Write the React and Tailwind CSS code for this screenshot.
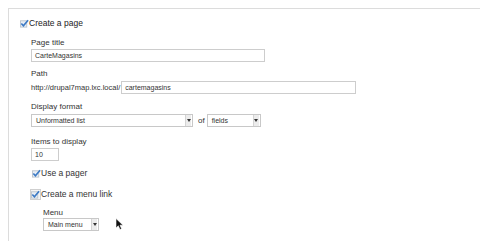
import React from "react";

const Check = ({ boxed }) => (
  <span className={`inline-flex items-center justify-center ${boxed ? "w-[11px] h-[11px] border border-[#cfcfcf] bg-[#f4f4f4]" : "w-[9px] h-[9px]"}`}>
    <svg width="10" height="9" viewBox="0 0 10 9">
      <rect x="0.5" y="1.5" width="7" height="7" fill="#e8eef5" stroke="#b9c3cc" strokeWidth="1" />
      <path d="M1.5 4.5 L3.8 7 L9 0.8" fill="none" stroke="#3b79c4" strokeWidth="1.8" />
    </svg>
  </span>
);

const Select = ({ value, width }) => (
  <div className={`flex items-center h-[13px] border border-[#c8c8c8] bg-white ${width}`}>
    <span className="flex-1 pl-[4px] text-[7px] text-[#333] leading-none">{value}</span>
    <span className="flex items-center justify-center w-[6px] h-[11px] mr-[1px] border-l border-[#d4d4d4] bg-[#ececec]">
      <svg width="4" height="3" viewBox="0 0 4 3">
        <path d="M0 0 H4 L2 3 Z" fill="#333" />
      </svg>
    </span>
  </div>
);

const Label = ({ children, className = "" }) => (
  <div className={`text-[8px] leading-none text-[#333] ${className}`}>{children}</div>
);

const Input = ({ value, width }) => (
  <div className={`flex items-center h-[13px] border border-[#cdcdcd] bg-white pl-[3px] text-[7px] text-[#333] leading-none ${width}`}>
    {value}
  </div>
);

export default function App() {
  return (
    <div className="w-[480px] h-[241px] bg-white pt-[8px] pl-[8px] overflow-hidden" style={{ fontFamily: '"Liberation Sans", Arial, sans-serif' }}>
      <div className="h-full border-t border-l border-[#dcdcdc] relative">
        <div className="flex items-center pl-[11px] pt-[10px]">
          <Check />
          <span className="text-[8.5px] text-[#222] leading-none">Create a page</span>
        </div>

        <div className="pl-[22px]">
          <Label className="mt-[11px]">Page title</Label>
          <Input value="CarteMagasins" width="w-[234px] mt-[2px]" />

          <Label className="mt-[8px]">Path</Label>
          <div className="flex items-center mt-[3px]">
            <span className="text-[7.5px] text-[#333] leading-none">http://drupal7map.lxc.local/</span>
            <Input value="cartemagasins" width="w-[235px] ml-[1px] h-[12px]" />
          </div>

          <Label className="mt-[9px]">Display format</Label>
          <div className="flex items-center mt-[3px]">
            <Select value="Unformatted list" width="w-[162px]" />
            <span className="text-[8px] text-[#333] ml-[5px] mr-[2px] leading-none">of</span>
            <Select value="fields" width="w-[54px]" />
          </div>

          <Label className="mt-[11px]">Items to display</Label>
          <Input value="10" width="w-[28px] mt-[2px]" />

          <div className="flex items-center mt-[8px] ml-[1px]">
            <Check />
            <span className="text-[8.5px] text-[#333] leading-none">Use a pager</span>
          </div>

          <div className="flex items-center mt-[11px] -ml-[1px]">
            <Check boxed />
            <span className="text-[8.5px] text-[#333] leading-none">Create a menu link</span>
          </div>

          <div className="pl-[12px]">
            <Label className="mt-[9px]">Menu</Label>
            <div className="flex items-center mt-[1px]">
              <Select value="Main menu" width="w-[56px]" />
              <svg className="ml-[16px] -mt-[1px]" width="9" height="12" viewBox="0 0 9 12">
                <path d="M1 0.5 L1 10 L3.3 7.8 L5 11.5 L6.6 10.8 L5 7.2 L8 7.2 Z" fill="#111" stroke="#fff" strokeWidth="0.6" />
              </svg>
            </div>
          </div>
        </div>
      </div>
    </div>
  );
}
